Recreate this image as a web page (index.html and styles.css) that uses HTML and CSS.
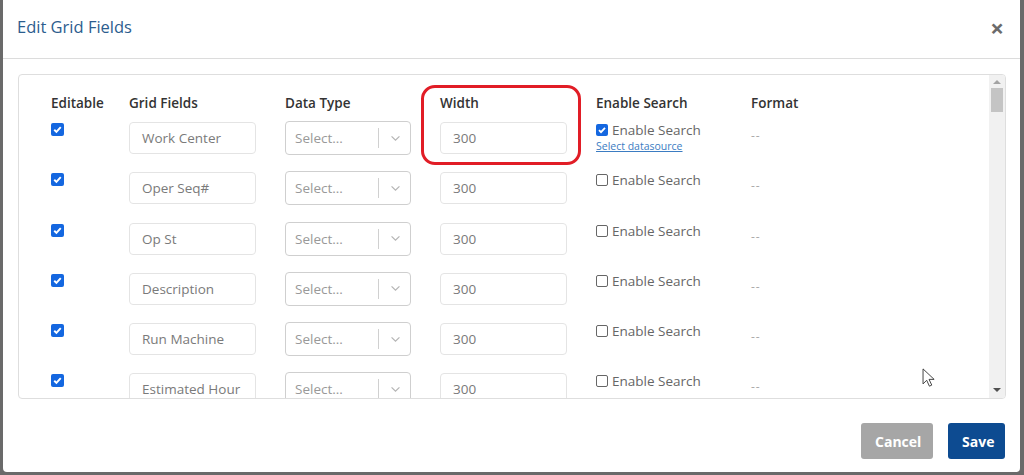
FILE: index.html
```html
<!DOCTYPE html>
<html lang="en">
<head>
  <meta charset="UTF-8" />
  <title>Edit Grid Fields</title>
  <link rel="stylesheet" href="styles.css">
</head>
<body>
  <div class="modal">
    <div class="modal-header">
      <h2>Edit Grid Fields</h2>
      <span class="close">&times;</span>
    </div>

    <div class="modal-body">
      <div class="fields-box">
        <div class="fields-scroll">
          <div class="fields-grid">
            <div class="col-head">Editable</div>
            <div class="col-head">Grid Fields</div>
            <div class="col-head">Data Type</div>
            <div class="col-head">Width</div>
            <div class="col-head">Enable Search</div>
            <div class="col-head">Format</div>

            <!-- row 1 -->
            <div class="cell"><span class="check on"><svg viewBox="0 0 12 12"><path d="M3 6.2l2 2 4-4.4" /></svg></span></div>
            <div class="cell"><div class="text-input">Work Center</div></div>
            <div class="cell"><div class="select"><span>Select...</span><i class="sep"></i><svg class="chev" viewBox="0 0 12 8"><path d="M1.5 1.5l4.5 4.5 4.5-4.5" /></svg></div></div>
            <div class="cell"><div class="text-input">300</div></div>
            <div class="cell search">
              <label><span class="check on small"><svg viewBox="0 0 12 12"><path d="M3 6.2l2 2 4-4.4" /></svg></span>Enable Search</label>
              <a class="ds-link">Select datasource</a>
            </div>
            <div class="cell fmt">--</div>

            <!-- row 2 -->
            <div class="cell"><span class="check on"><svg viewBox="0 0 12 12"><path d="M3 6.2l2 2 4-4.4" /></svg></span></div>
            <div class="cell"><div class="text-input">Oper Seq#</div></div>
            <div class="cell"><div class="select"><span>Select...</span><i class="sep"></i><svg class="chev" viewBox="0 0 12 8"><path d="M1.5 1.5l4.5 4.5 4.5-4.5" /></svg></div></div>
            <div class="cell"><div class="text-input">300</div></div>
            <div class="cell search"><label><span class="check off"></span>Enable Search</label></div>
            <div class="cell fmt">--</div>

            <!-- row 3 -->
            <div class="cell"><span class="check on"><svg viewBox="0 0 12 12"><path d="M3 6.2l2 2 4-4.4" /></svg></span></div>
            <div class="cell"><div class="text-input">Op St</div></div>
            <div class="cell"><div class="select"><span>Select...</span><i class="sep"></i><svg class="chev" viewBox="0 0 12 8"><path d="M1.5 1.5l4.5 4.5 4.5-4.5" /></svg></div></div>
            <div class="cell"><div class="text-input">300</div></div>
            <div class="cell search"><label><span class="check off"></span>Enable Search</label></div>
            <div class="cell fmt">--</div>

            <!-- row 4 -->
            <div class="cell"><span class="check on"><svg viewBox="0 0 12 12"><path d="M3 6.2l2 2 4-4.4" /></svg></span></div>
            <div class="cell"><div class="text-input">Description</div></div>
            <div class="cell"><div class="select"><span>Select...</span><i class="sep"></i><svg class="chev" viewBox="0 0 12 8"><path d="M1.5 1.5l4.5 4.5 4.5-4.5" /></svg></div></div>
            <div class="cell"><div class="text-input">300</div></div>
            <div class="cell search"><label><span class="check off"></span>Enable Search</label></div>
            <div class="cell fmt">--</div>

            <!-- row 5 -->
            <div class="cell"><span class="check on"><svg viewBox="0 0 12 12"><path d="M3 6.2l2 2 4-4.4" /></svg></span></div>
            <div class="cell"><div class="text-input">Run Machine</div></div>
            <div class="cell"><div class="select"><span>Select...</span><i class="sep"></i><svg class="chev" viewBox="0 0 12 8"><path d="M1.5 1.5l4.5 4.5 4.5-4.5" /></svg></div></div>
            <div class="cell"><div class="text-input">300</div></div>
            <div class="cell search"><label><span class="check off"></span>Enable Search</label></div>
            <div class="cell fmt">--</div>

            <!-- row 6 -->
            <div class="cell"><span class="check on"><svg viewBox="0 0 12 12"><path d="M3 6.2l2 2 4-4.4" /></svg></span></div>
            <div class="cell"><div class="text-input">Estimated Hour</div></div>
            <div class="cell"><div class="select"><span>Select...</span><i class="sep"></i><svg class="chev" viewBox="0 0 12 8"><path d="M1.5 1.5l4.5 4.5 4.5-4.5" /></svg></div></div>
            <div class="cell"><div class="text-input">300</div></div>
            <div class="cell search"><label><span class="check off"></span>Enable Search</label></div>
            <div class="cell fmt">--</div>
          </div>

          <!-- highlight around the Width column -->
          <div class="highlight"></div>
        </div>

        <div class="scrollbar">
          <span class="arrow up"></span>
          <div class="track"><div class="thumb"></div></div>
          <span class="arrow down"></span>
        </div>
      </div>
    </div>

    <div class="modal-footer">
      <button class="btn btn-cancel">Cancel</button>
      <button class="btn btn-save">Save</button>
    </div>

    <svg class="pointer" viewBox="0 0 14 22">
      <path d="M1 1v16.5l4-4 3 6.5 2.6-1.2-3-6.3h5.6z" />
    </svg>
  </div>
</body>
</html>
```

FILE: styles.css
```css
body {
  margin: 0;
  background: #6a6a6a;
  font-family: 'Open Sans', 'Liberation Sans', sans-serif;
  height: 475px;
  overflow: hidden;
}
.modal {
  position: relative;
  margin: 0 4px 0 3px;
  height: 472px;
  background: #fff;
  border-radius: 0 0 4px 4px;
  display: flex;
  flex-direction: column;
}
.modal-header {
  height: 59px;
  border-bottom: 1px solid #dcdcdc;
  padding: 0 16px 5px 14px;
  box-sizing: border-box;
  display: flex;
  align-items: center;
  justify-content: space-between;
}
.modal-header h2 {
  margin: 0;
  font-size: 16.5px;
  font-weight: 400;
  color: #2c5d8e;
}
.close {
  font-size: 24px;
  font-weight: 700;
  color: #6b6b6b;
  line-height: 1;
  margin-top: 3px;
}
.modal-body {
  padding: 15px 14px 0 15px;
}
.fields-box {
  height: 323px;
  border: 1px solid #dedede;
  border-radius: 4px;
  display: flex;
  overflow: hidden;
}
.fields-scroll {
  position: relative;
  flex: 1;
  overflow: hidden;
}
.fields-grid {
  display: grid;
  grid-template-columns: 78px 156px 155px 156px 155px 1fr;
  grid-auto-rows: 50.3px;
  grid-template-rows: 28px;
  padding: 19px 0 0 32px;
}
.col-head {
  font-size: 13.5px;
  font-weight: 600;
  color: #333;
  line-height: 18px;
}
.cell {
  font-size: 13.5px;
  color: #777;
}
.text-input {
  width: 127px;
  height: 32px;
  box-sizing: border-box;
  border: 1px solid #e4e4e4;
  border-radius: 4px;
  padding: 0 12px;
  line-height: 30px;
  color: #7a7a7a;
  white-space: nowrap;
  overflow: hidden;
}
.select {
  width: 126px;
  height: 34px;
  margin-top: -1px;
  box-sizing: border-box;
  border: 1px solid #cfcfcf;
  border-radius: 4px;
  display: flex;
  align-items: center;
  padding-left: 9px;
  color: #999;
}
.select span {
  width: 83px;
}
.select .sep {
  width: 1px;
  height: 20px;
  background: #d0d0d0;
}
.select .chev {
  width: 11px;
  height: 7px;
  margin-left: 11px;
  fill: none;
  stroke: #b5b5b5;
  stroke-width: 1.4;
}
.check {
  display: inline-flex;
  width: 13px;
  height: 13px;
  box-sizing: border-box;
  border-radius: 2px;
  margin-top: 1px;
}
.check.on {
  background: #1467e0;
}
.check.small {
  width: 12px;
  height: 12px;
}
.check svg {
  width: 100%;
  height: 100%;
  fill: none;
  stroke: #fff;
  stroke-width: 1.8;
}
.check.off {
  width: 12px;
  height: 12px;
  border: 1px solid #666;
  background: #fff;
}
.search label {
  display: flex;
  align-items: center;
  gap: 4px;
  line-height: 18px;
  color: #666;
  margin-top: -1px;
}
.search .check {
  margin-top: 0;
}
.ds-link {
  display: block;
  margin-top: 1px;
  font-size: 10.5px;
  line-height: 12px;
  color: #3b7cc2;
  text-decoration: underline;
}
.fmt {
  padding-top: 5px;
  color: #aaa;
  font-size: 12px;
  letter-spacing: 1px;
}
.highlight {
  position: absolute;
  left: 402px;
  top: 10px;
  width: 160px;
  height: 80px;
  box-sizing: border-box;
  border: 3px solid #e11d26;
  border-radius: 14px;
}
.scrollbar {
  width: 16px;
  background: #f1f1f1;
  display: flex;
  flex-direction: column;
  align-items: center;
}
.scrollbar .track {
  flex: 1;
  width: 100%;
}
.scrollbar .thumb {
  width: 12px;
  height: 24px;
  margin: 0 auto;
  background: #c4c4c4;
}
.arrow {
  width: 0;
  height: 0;
  border-left: 4px solid transparent;
  border-right: 4px solid transparent;
}
.arrow.up {
  margin: 5px 0 4px;
  border-bottom: 4px solid #a3a3a3;
}
.arrow.down {
  margin: 4px 0 6px;
  border-top: 4px solid #505050;
}
.modal-footer {
  display: flex;
  justify-content: flex-end;
  gap: 15px;
  padding: 24px 15px 0;
}
.btn {
  height: 36px;
  border: none;
  border-radius: 3px;
  color: #fff;
  font-family: inherit;
  font-size: 14px;
  font-weight: 700;
  padding: 0 14px;
}
.btn-cancel {
  width: 72px;
  background: #a6a6a6;
}
.btn-save {
  width: 57px;
  background: #0d4b91;
}
.pointer {
  position: absolute;
  left: 919px;
  top: 368px;
  width: 13px;
  height: 20px;
  fill: #fff;
  stroke: #333;
  stroke-width: 1;
}
```
